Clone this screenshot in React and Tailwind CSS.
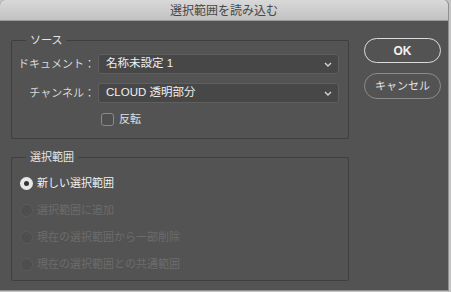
export default function App() {
  const chevron = (
    <svg width="8" height="5" viewBox="0 0 8 5" className="shrink-0">
      <polyline points="1,1 4,4 7,1" fill="none" stroke="#d4d4d4" strokeWidth="1.4" />
    </svg>
  );
  const disabled = ["選択範囲に追加", "現在の選択範囲から一部削除", "現在の選択範囲との共通範囲"];
  return (
    <div className="w-[451px] h-[292px] bg-[#c4c4c4] font-['Liberation_Sans','Noto_Sans_CJK_JP',sans-serif]">
      <div className="w-[449px] h-[291px] flex flex-col bg-[#535353] rounded-t-[5px] overflow-hidden border-r border-b border-[#8f8f8f]">
        <div className="h-[21px] shrink-0 bg-gradient-to-b from-[#d9d9d9] to-[#c2c2c2] border-b border-[#9a9a9a] flex items-center justify-center text-[12px] text-[#474747] font-['Noto_Sans_CJK_JP',sans-serif]">
          選択範囲を読み込む
        </div>
        <div className="flex pl-[11px] pt-[11px]">
          <div className="w-[338px] flex flex-col gap-[10px]">
            <fieldset className="border border-[#3f3f3f] rounded-[2px]">
              <legend className="ml-[14px] px-[4px] text-[11px] leading-[16px] text-[#e6e6e6]">ソース</legend>
              <div className="pt-[6px] pb-[12px] flex flex-col">
                <div className="flex items-center h-[20px]">
                  <div className="w-[83px] text-right text-[11px] text-[#d8d8d8] whitespace-nowrap">ドキュメント：</div>
                  <div className="ml-[3px] w-[241px] h-[20px] bg-[#474747] border border-[#5f5f5f] rounded-[3px] flex items-center justify-between pl-[7px] pr-[6px] text-[11.5px] text-[#f0f0f0]">
                    <span>名称未設定 1</span>
                    {chevron}
                  </div>
                </div>
                <div className="flex items-center h-[20px] mt-[9px]">
                  <div className="w-[83px] text-right text-[11px] text-[#d8d8d8] whitespace-nowrap">チャンネル：</div>
                  <div className="ml-[3px] w-[241px] h-[20px] bg-[#474747] border border-[#5f5f5f] rounded-[3px] flex items-center justify-between pl-[7px] pr-[6px] text-[11.5px] text-[#f0f0f0]">
                    <span>CLOUD 透明部分</span>
                    {chevron}
                  </div>
                </div>
                <div className="flex items-center h-[13px] mt-[10px] pl-[89px]">
                  <div className="w-[13px] h-[13px] rounded-[3px] border border-[#8a8a8a] bg-[#4f4f4f]" />
                  <span className="ml-[5px] text-[11px] text-[#e0e0e0]">反転</span>
                </div>
              </div>
            </fieldset>
            <fieldset className="border border-[#3f3f3f] rounded-[2px]">
              <legend className="ml-[14px] px-[4px] text-[11px] leading-[16px] text-[#e6e6e6]">選択範囲</legend>
              <div className="pt-[5px] pb-[2px] flex flex-col">
                <div className="flex items-center h-[27px] pl-[8px]">
                  <div className="w-[13px] h-[13px] rounded-full bg-[#e8e8e8] flex items-center justify-center">
                    <div className="w-[5px] h-[5px] rounded-full bg-[#333333]" />
                  </div>
                  <span className="ml-[4px] text-[11px] text-[#f0f0f0]">新しい選択範囲</span>
                </div>
                {disabled.map((t) => (
                  <div key={t} className="flex items-center h-[27px] pl-[8px]">
                    <div className="w-[13px] h-[13px] rounded-full border border-[#5c5c5c] bg-[#4e4e4e]" />
                    <span className="ml-[4px] text-[11px] text-[#6c6c6c]">{t}</span>
                  </div>
                ))}
              </div>
            </fieldset>
          </div>
          <div className="ml-[15px] pt-[6px] flex flex-col gap-[10px]">
            <div className="w-[77px] h-[25px] rounded-full border-[1.5px] border-[#dcdcdc] flex items-center justify-center text-[12px] font-bold text-[#f2f2f2]">
              OK
            </div>
            <div className="w-[77px] h-[26px] rounded-full border border-[#8c8c8c] flex items-center justify-center text-[11px] text-[#e2e2e2]">
              キャンセル
            </div>
          </div>
        </div>
      </div>
    </div>
  );
}
